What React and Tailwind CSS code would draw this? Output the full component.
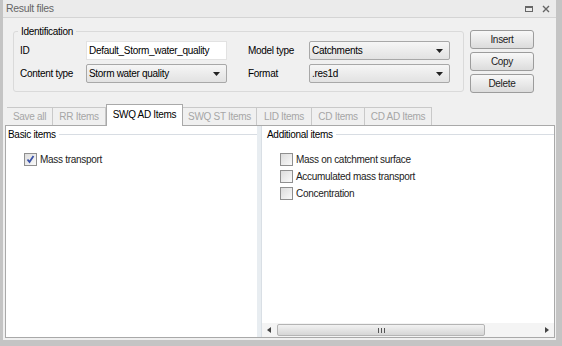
import React from "react";

const font = { fontFamily: '"Liberation Sans", Tahoma, sans-serif', letterSpacing: "-0.3px" };

function Caret() {
  return (
    <svg width="7" height="4" viewBox="0 0 7 4" className="shrink-0">
      <path d="M0 0h7L3.5 4z" fill="#222" />
    </svg>
  );
}

function Select({ value, className }) {
  return (
    <div
      className={`flex h-[19px] items-center justify-between rounded-[2px] border border-[#a8a8a8] bg-gradient-to-b from-[#f6f6f6] to-[#e2e2e2] pl-[2px] pr-[6px] text-black ${className}`}
    >
      <span>{value}</span>
      <Caret />
    </div>
  );
}

function Btn({ label }) {
  return (
    <div className="flex h-[19px] w-[64px] items-center justify-center rounded-[3px] border border-[#9c9c9c] bg-gradient-to-b from-[#f8f8f8] to-[#dcdcdc] text-[#222]">
      {label}
    </div>
  );
}

function Check({ checked, label }) {
  return (
    <div className="flex h-[17px] items-center gap-[3px] text-[#222]">
      <div className="flex h-[13px] w-[13px] items-center justify-center border border-[#8f8f8f] bg-gradient-to-br from-[#dcdcdc] to-[#fafafa]">
        {checked && (
          <svg width="9" height="9" viewBox="0 0 9 9">
            <path d="M1.5 4.5l2 2.5 4-6" stroke="#3a52a8" strokeWidth="1.8" fill="none" />
          </svg>
        )}
      </div>
      <span>{label}</span>
    </div>
  );
}

function GroupTitle({ title }) {
  return (
    <div className="flex items-center gap-[3px] text-black">
      <span>{title}</span>
      <div className="h-px flex-1 bg-[#d8dde3]" />
    </div>
  );
}

const tabs = ["Save all", "RR Items", "SWQ AD Items", "SWQ ST Items", "LID Items", "CD Items", "CD AD Items"];
const tabW = ["w-[46px]", "w-[53px]", "w-[77px]", "w-[74px]", "w-[55px]", "w-[53px]", "w-[67px]"];

export default function App() {
  return (
    <div style={font} className="flex h-[346px] w-[562px] flex-col bg-[#b9b9b9] text-[10px]">
      <div className="flex flex-1 flex-col border-l-[3px] border-r-[6px] border-b-[6px] border-[#c4c4c4] bg-[#f0f0f0]">
        {/* title bar */}
        <div className="flex h-[18px] items-center justify-between border-b border-[#d4d4d4] bg-[#ebebeb] pl-[3px] pr-[6px]">
          <span className="text-[10.5px] text-[#666]">Result files</span>
          <div className="flex items-center gap-[9px]">
            <div className="h-[6px] w-[8px] border-x border-t-2 border-b border-[#666]" />
            <svg width="8" height="8" viewBox="0 0 8 8">
              <path d="M1 1l6 6M7 1L1 7" stroke="#666" strokeWidth="1.4" />
            </svg>
          </div>
        </div>

        {/* top section */}
        <div className="flex gap-[6px] pl-[10px] pt-[13px]">
          <div className="relative h-[61px] w-[451px] rounded-[3px] border border-[#dadada] px-[6px] pt-[9px]">
            <span className="absolute -top-[8px] left-[4px] bg-[#f0f0f0] px-[3px] text-black">Identification</span>
            <div className="flex flex-col gap-[4px]">
              <div className="flex items-center">
                <span className="w-[66px] text-black">ID</span>
                <div className="flex h-[19px] w-[141px] items-center border border-[#e2e2e2] bg-white pl-[2px] text-black">
                  Default_Storm_water_quality
                </div>
                <span className="ml-[21px] w-[61px] text-black">Model type</span>
                <Select value="Catchments" className="w-[141px]" />
              </div>
              <div className="flex items-center">
                <span className="w-[66px] text-black">Content type</span>
                <Select value="Storm water quality" className="w-[141px]" />
                <span className="ml-[21px] w-[61px] text-black">Format</span>
                <Select value=".res1d" className="w-[141px]" />
              </div>
            </div>
          </div>
          <div className="-mt-[1px] flex flex-col gap-[3px]">
            <Btn label="Insert" />
            <Btn label="Copy" />
            <Btn label="Delete" />
          </div>
        </div>

        {/* tabs */}
        <div className="mt-[11px] flex items-end pl-[4px]">
          {tabs.map((t, i) =>
            i === 2 ? (
              <div
                key={t}
                className={`${tabW[i]} z-10 -mb-px flex h-[22px] items-center justify-center border border-b-0 border-[#a9a9a9] bg-white pb-[2px] text-black`}
              >
                {t}
              </div>
            ) : (
              <div
                key={t}
                className={`${tabW[i]} flex h-[18px] items-center justify-center border border-b-0 border-l-0 border-[#c9c9c9] text-[#a6a6a6] ${i === 0 ? "border-l" : ""}`}
              >
                {t}
              </div>
            )
          )}
        </div>

        {/* content */}
        <div className="mb-[2px] ml-[2px] mr-[1px] flex flex-1 border border-[#a9a9a9] bg-white">
          <div className="flex w-[255px] flex-col border-r-[4px] border-[#e8edf1] pl-[2px] pt-[1px]">
            <GroupTitle title="Basic items" />
            <div className="pl-[16px] pt-[9px]">
              <Check checked label="Mass transport" />
            </div>
          </div>
          <div className="flex flex-1 flex-col border-l border-[#d9dfe5]">
            <div className="flex flex-1 flex-col pl-[5px] pt-[1px]">
              <GroupTitle title="Additional items" />
              <div className="pl-[13px] pt-[9px]">
                <Check label="Mass on catchment surface" />
                <Check label="Accumulated mass transport" />
                <Check label="Concentration" />
              </div>
            </div>
            <div className="flex h-[14px] items-center bg-[#f4f4f4] px-[3px]">
              <svg width="8" height="8" viewBox="0 0 8 8">
                <path d="M6 1v6L2 4z" fill="#444" />
              </svg>
              <div className="ml-[4px] flex h-[12px] w-[208px] items-center justify-center rounded-[2px] border border-[#b4b4b4] bg-gradient-to-b from-[#f2f2f2] to-[#d6d6d6]">
                <svg width="7" height="5" viewBox="0 0 7 5">
                  <path d="M0.5 0v5M3.5 0v5M6.5 0v5" stroke="#555" strokeWidth="1" />
                </svg>
              </div>
              <div className="flex-1" />
              <svg width="8" height="8" viewBox="0 0 8 8">
                <path d="M2 1v6L6 4z" fill="#444" />
              </svg>
            </div>
          </div>
        </div>
      </div>
    </div>
  );
}
